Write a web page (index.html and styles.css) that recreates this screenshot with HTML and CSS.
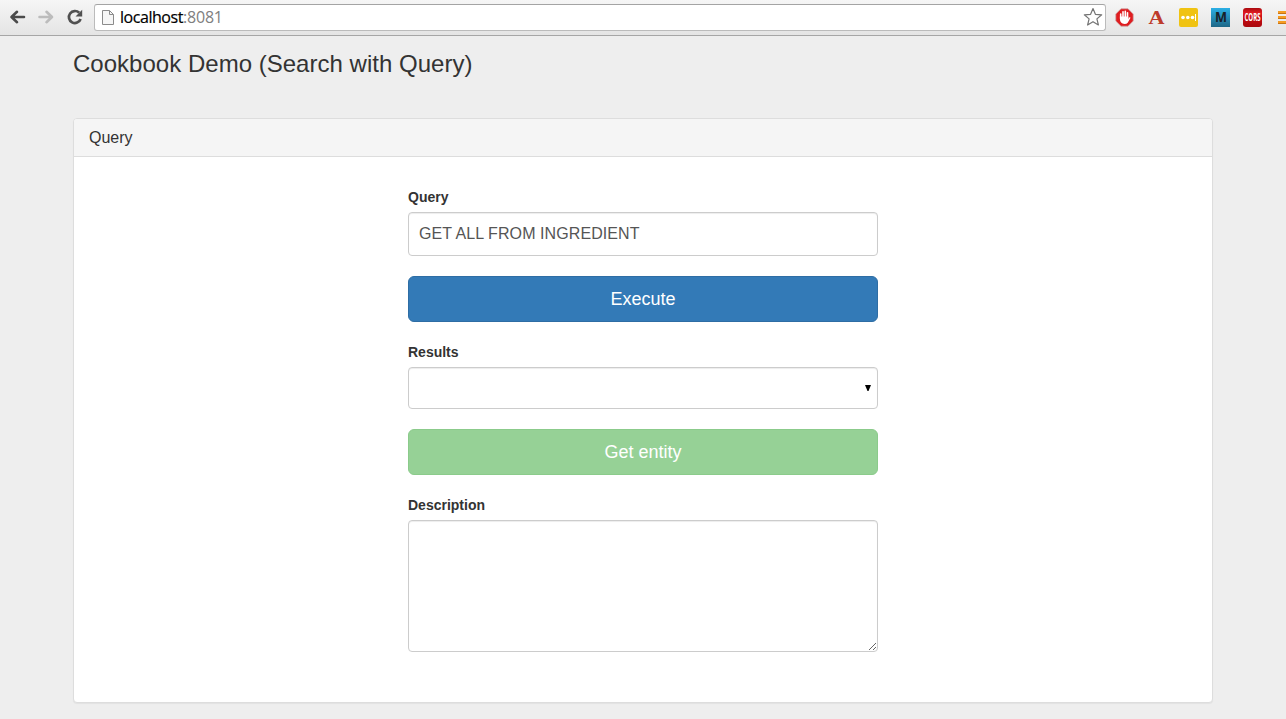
FILE: index.html
```html
<!DOCTYPE html>
<html lang="en">
<head>
<meta charset="utf-8">
<title>Cookbook Demo</title>
<link rel="stylesheet" href="styles.css">
</head>
<body>
<header class="toolbar">
  <nav class="nav">
    <svg width="16" height="16" viewBox="0 0 16 16"><path d="M15 8H3M8 2.800L2.500 8L8 13.200" fill="none" stroke="#4b4b4b" stroke-width="2.600" stroke-linecap="round" stroke-linejoin="round"/></svg>
    <svg width="16" height="16" viewBox="0 0 16 16"><path d="M1.500 8H13M8.500 2.800L14 8L8.500 13.200" fill="none" stroke="#bcbcbc" stroke-width="2.600" stroke-linecap="round" stroke-linejoin="round"/></svg>
    <svg width="16" height="16" viewBox="0 0 16 16"><path d="M12.200 3.800A6 6 0 1 0 13.600 10" fill="none" stroke="#505050" stroke-width="2.700"/><path d="M15.200 .8V7.500H8.500Z" fill="#505050"/></svg>
  </nav>
  <div class="address">
    <svg class="page-icon" width="12" height="16" viewBox="0 0 12 16"><path d="M.5 1.500H7.500L11.500 5.500V15.500H.5Z" fill="#f6f6f6" stroke="#8b8b8b"/><path d="M7.500 1.500V5.500H11.500" fill="none" stroke="#8b8b8b"/></svg>
    <span class="host">localhost</span><span class="port">:8081</span>
    <svg class="star" width="20" height="20" viewBox="0 0 20 20"><path d="M10 1.500L12.400 7.300L18.700 7.800L13.900 11.900L15.400 18L10 14.700L4.600 18L6.100 11.900L1.300 7.800L7.600 7.300Z" fill="#fff" stroke="#747474" stroke-width="1.200" stroke-linejoin="round"/></svg>
  </div>
  <div class="extensions">
    <svg width="19" height="19" viewBox="0 0 19 19"><path d="M6 .8H13L18.200 6V13L13 18.200H6L.8 13V6Z" fill="#df1d20" stroke="#c9a3a3" stroke-width=".7"/><path d="M5.700 10.500V6M8 9V3.800M10.300 9V3.200M12.500 10V4.700" stroke="#fff" stroke-width="1.600" stroke-linecap="round"/><path d="M4.900 8.500H13.300V11L14.400 9.300Q15.500 8.800 15.400 10L12.700 14.800Q11.700 16 9.500 16Q5 15.600 4.900 11Z" fill="#fff"/></svg>
    <span class="ext ext-a"><svg width="19" height="19" viewBox="0 0 19 19"><text x="1.500" y="15.500" textLength="16" lengthAdjust="spacingAndGlyphs">A</text></svg></span>
    <span class="ext ext-dots"><svg width="19" height="19" viewBox="0 0 19 19"><g fill="#fff"><circle cx="4" cy="9.500" r="1.800"/><circle cx="8.800" cy="9.500" r="1.800"/><circle cx="13.500" cy="9.500" r="1.800"/><path d="M16 6H17V13H16Z"/></g></svg></span>
    <span class="ext ext-m"><svg width="19" height="19" viewBox="0 0 19 19"><text x="4" y="14" textLength="12" lengthAdjust="spacingAndGlyphs">M</text></svg></span>
    <span class="ext ext-cors"><svg width="19" height="19" viewBox="0 0 19 19"><text x="1.500" y="13" textLength="16" lengthAdjust="spacingAndGlyphs">CORS</text></svg></span>
    <svg class="menu" width="10" height="16" viewBox="0 0 10 16"><path d="M1 2H10V5H1ZM1 7H10V10H1ZM1 12H10V15H1Z" fill="#f59b23"/><path d="M1 4.500H10M1 9.500H10M1 14.500H10" stroke="#c87414"/></svg>
  </div>
</header>
<main class="container">
  <h3 class="title">Cookbook Demo (Search with Query)</h3>
  <section class="panel">
    <h4 class="panel-heading">Query</h4>
    <form class="form">
      <label class="label" for="query">Query</label>
      <input class="control input" id="query" type="text" value="GET ALL FROM INGREDIENT">
      <button class="button primary" type="button">Execute</button>
      <label class="label" for="results">Results</label>
      <div class="control select" id="results"><svg width="6" height="6" viewBox="0 0 6 6"><path d="M0 0H6L3.500 6H2.500Z" fill="#000"/></svg></div>
      <button class="button success" type="button">Get entity</button>
      <label class="label" for="description">Description</label>
      <textarea class="control textarea" id="description"></textarea>
    </form>
  </section>
</main>
</body>
</html>
```
FILE: styles.css
```css
* { box-sizing: border-box; }
body {
  margin: 0;
  height: 719px;
  overflow: hidden;
  background: #eee;
  color: #333;
  font-family: "Liberation Sans", Arial, sans-serif;
}
svg { display: block; flex: none; overflow: visible; }
.toolbar {
  display: flex;
  align-items: center;
  height: 36px;
  padding-bottom: 1px;
  border-bottom: 1px solid #a6a6a6;
  background: linear-gradient(#f6f6f6, #e4e4e4);
}
.nav {
  display: flex;
  flex: none;
  gap: 13px;
  width: 94px;
  padding-left: 9px;
}
.address {
  display: flex;
  flex: none;
  align-items: center;
  width: 1012px;
  height: 27px;
  padding: 0 2px 0 7px;
  border: 1px solid #bbb;
  border-top-color: #a4a4a4;
  border-radius: 3px;
  background: #fff;
  font: 16px/25px "Open Sans", "Noto Sans", sans-serif;
}
.page-icon { margin-right: 6px; }
.host {
  width: 63px;
  color: #000;
  letter-spacing: -0.45px;
  white-space: nowrap;
  -webkit-text-stroke: 0.2px #000;
}
.port {
  color: #808080;
  letter-spacing: -0.2px;
}
.star { margin-left: auto; }
.extensions {
  display: flex;
  flex: none;
  align-items: center;
  gap: 13px;
  padding-left: 9px;
}
.ext {
  width: 19px;
  height: 19px;
}
.ext-a text {
  fill: #bd3b2b;
  font: bold 19px "Liberation Serif", serif;
}
.ext-dots {
  border-radius: 2px;
  background: #f0c312;
}
.ext-m { background: linear-gradient(#2bafe5, #1d6787); }
.ext-m text {
  fill: #182129;
  font: bold 14px "Open Sans", sans-serif;
}
.ext-cors {
  border-radius: 3px;
  background: linear-gradient(#a80b10, #e01a20 25%, #c20a10 60%, #a9090e);
}
.ext-cors text {
  fill: #fff;
  font: bold 10px "Open Sans", sans-serif;
}
.menu { margin-left: 2px; }
.container {
  width: 1140px;
  margin: 0 auto;
  padding-top: 15px;
}
.title {
  margin: 0 0 41px;
  font-size: 24px;
  font-weight: 400;
  line-height: 26px;
  letter-spacing: 0.02px;
}
.panel {
  height: 585px;
  border: 1px solid #ddd;
  border-radius: 4px;
  background: #fff;
  box-shadow: 0 1px 1px rgba(0, 0, 0, 0.05);
}
.panel-heading {
  height: 38px;
  margin: 0;
  padding: 10px 15px;
  border-bottom: 1px solid #ddd;
  border-radius: 3px 3px 0 0;
  background: #f5f5f5;
  font-size: 16px;
  font-weight: 400;
  line-height: 17px;
}
.form {
  display: flex;
  flex-direction: column;
  width: 470px;
  margin: 0 auto;
  padding-top: 30px;
}
.label {
  margin-bottom: 5px;
  font-size: 14px;
  font-weight: 700;
  line-height: 20px;
}
.control {
  border: 1px solid #ccc;
  border-radius: 4px;
  background: #fff;
  color: #555;
  box-shadow: inset 0 1px 1px rgba(0, 0, 0, 0.075);
  font: 16px "Liberation Sans", Arial, sans-serif;
  outline: none;
}
.input {
  height: 44px;
  margin-bottom: 20px;
  padding: 6px 10px;
  letter-spacing: 0.08px;
}
.select {
  display: flex;
  justify-content: flex-end;
  align-items: center;
  height: 42px;
  margin-bottom: 20px;
  padding-right: 6px;
}
.textarea {
  height: 132px;
  margin: 0;
  padding: 10px;
  resize: both;
}
.button {
  height: 46px;
  margin: 0 0 20px;
  padding: 0;
  border: 1px solid;
  border-radius: 6px;
  color: #fff;
  font: 18px/24px "Liberation Sans", Arial, sans-serif;
}
.primary {
  border-color: #2e6da4;
  background: #337ab7;
}
.success {
  border-color: #8bcb8b;
  background: #96d196;
}
```
